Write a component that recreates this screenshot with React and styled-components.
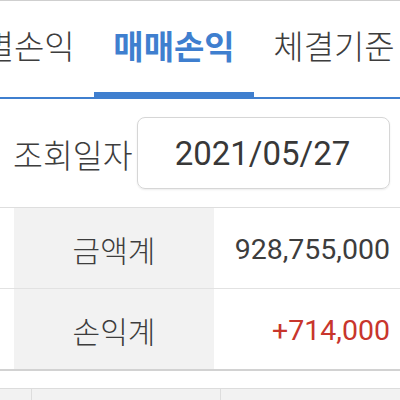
import React from 'react'
import styled, { createGlobalStyle } from 'styled-components'

const GlobalStyle = createGlobalStyle`
  html, body {
    margin: 0;
    padding: 0;
    background: #fff;
    overflow: hidden;
  }
  body {
    font-family: Roboto, "Noto Sans CJK KR", sans-serif;
    color: #3d3d3d;
  }
`;

const Screen = styled.div`
  width: 400px;
  height: 400px;
  overflow: hidden;
  border-top: 1px solid #cfcfcf;
  box-sizing: border-box;
`;

const TabBar = styled.div`
  height: 96px;
  border-bottom: 2px solid #3f7fcf;
  box-sizing: content-box;
  overflow: hidden;
`;

const TabStrip = styled.div`
  display: flex;
  margin-left: -66px;
  height: 100%;
`;

const Tab = styled.div`
  flex: 0 0 160px;
  display: flex;
  align-items: center;
  justify-content: center;
  font-size: 33px;
  white-space: nowrap;
  padding-bottom: 4px;
  box-sizing: border-box;
  font-weight: ${({ active }) => (active ? 700 : 300)};
  color: ${({ active }) => (active ? '#3f7fcf' : '#3d3d3d')};
  border-bottom: 6px solid ${({ active }) => (active ? '#3f7fcf' : 'transparent')};
  margin-bottom: -1px;
`;

const DateRow = styled.div`
  display: flex;
  align-items: center;
  padding: 18px 10px 18px 13px;
`;

const Label = styled.div`
  flex: 1;
  font-size: 32.5px;
  font-weight: 300;
  white-space: nowrap;
`;

const DateBox = styled.div`
  flex: 0 0 253px;
  height: 72px;
  box-sizing: border-box;
  border: 1px solid #d6d6d6;
  border-radius: 8px;
  box-shadow: 0 1px 2px rgba(0, 0, 0, 0.08);
  display: flex;
  align-items: center;
  justify-content: center;
  font-size: 33px;
  color: #383838;
  padding-right: 2px;
`;

const Summary = styled.div`
  border-top: 1px solid #dedede;
  border-bottom: 2px solid #d2d2d2;
`;

const Row = styled.div`
  display: grid;
  grid-template-columns: 14px 200px 1fr;
  height: 80px;
  & + & {
    border-top: 1px solid #e2e2e2;
  }
`;

const Cell = styled.div`
  display: flex;
  align-items: center;
  padding-top: 2px;
`;

const HeadCell = styled(Cell)`
  background: #f2f2f2;
  justify-content: center;
  font-size: 30px;
  font-weight: 300;
`;

const ValueCell = styled(Cell)`
  justify-content: flex-end;
  padding-right: 10px;
  font-size: 28.5px;
  color: ${({ tone }) => (tone === 'up' ? '#c8362c' : '#3d3d3d')};
`;

const Detail = styled.div`
  margin-top: 17px;
  border-top: 1px solid #dcdcdc;
  background: #f2f2f2;
  height: 60px;
  display: grid;
  grid-template-columns: 32px 189px 1fr;
`;

const DetailCol = styled.div`
  border-right: 1px solid #dddddd;
  &:last-child {
    border-right: none;
  }
`;

const rows = [
  { label: '금액계', value: '928,755,000' },
  { label: '손익계', value: '+714,000', tone: 'up' },
];

export default function App() {
  return (
    <Screen>
      <GlobalStyle />
      <TabBar>
        <TabStrip>
          <Tab>일별손익</Tab>
          <Tab active>매매손익</Tab>
          <Tab>체결기준</Tab>
        </TabStrip>
      </TabBar>
      <DateRow>
        <Label>조회일자</Label>
        <DateBox>2021/05/27</DateBox>
      </DateRow>
      <Summary>
        {rows.map((r) => (
          <Row key={r.label}>
            <Cell />
            <HeadCell>{r.label}</HeadCell>
            <ValueCell tone={r.tone}>{r.value}</ValueCell>
          </Row>
        ))}
      </Summary>
      <Detail>
        <DetailCol />
        <DetailCol />
        <DetailCol />
      </Detail>
    </Screen>
  )
}
